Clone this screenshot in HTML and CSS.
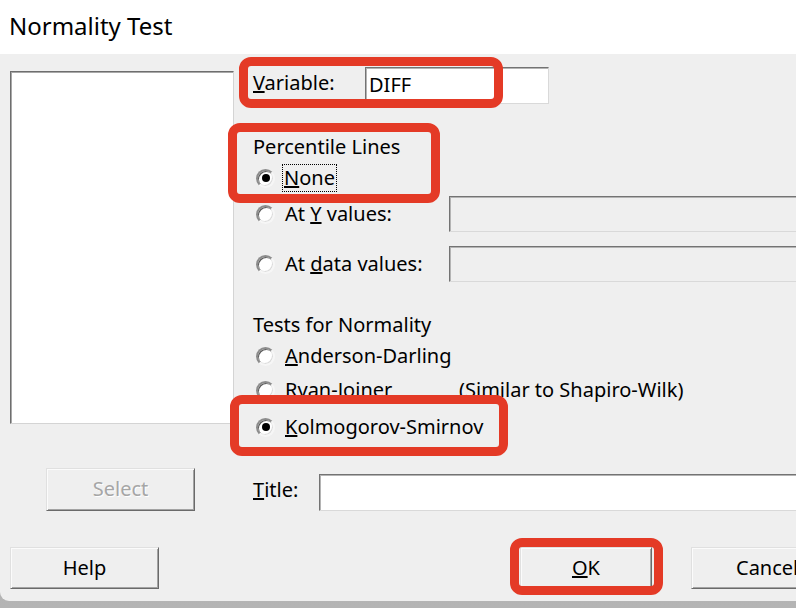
FILE: index.html
```html
<!DOCTYPE html>
<html>
<head>
<meta charset="utf-8">
<link rel="stylesheet" href="styles.css">
</head>
<body>
<div class="window">
  <div class="titlebar">Normality Test</div>
  <div class="content">
    <div class="main">
      <div class="leftcol">
        <div class="listbox"></div>
        <div class="btn select-btn">Select</div>
      </div>
      <div class="rightcol">
        <div class="row r-var">
          <span class="lbl var-lbl up"><u>V</u>ariable:</span>
          <div class="field var-field"><span class="up2">DIFF</span></div>
        </div>
        <div class="row r-pct"><span class="lbl">Percentile Lines</span></div>
        <div class="row r-none">
          <span class="radio checked"></span><span class="lbl focus"><u>N</u>one</span>
        </div>
        <div class="row r-aty">
          <span class="choice"><span class="radio"></span><span class="lbl">At <u>Y</u> values:</span></span>
          <div class="field dis-field"></div>
        </div>
        <div class="row r-atd">
          <span class="choice"><span class="radio"></span><span class="lbl">At <u>d</u>ata values:</span></span>
          <div class="field dis-field"></div>
        </div>
        <div class="row r-tests"><span class="lbl">Tests for Normality</span></div>
        <div class="row r-and">
          <span class="radio"></span><span class="lbl"><u>A</u>nderson-Darling</span>
        </div>
        <div class="row r-ryan">
          <span class="choice ryan"><span class="radio"></span><span class="lbl">Ryan-Joiner</span></span>
          <span class="lbl">(Similar to Shapiro-Wilk)</span>
        </div>
        <div class="row r-kol">
          <span class="radio checked"></span><span class="lbl"><u>K</u>olmogorov-Smirnov</span>
        </div>
        <div class="row r-title">
          <span class="lbl title-lbl up"><u>T</u>itle:</span>
          <div class="field title-field"></div>
        </div>
      </div>
    </div>
    <div class="buttons">
      <div class="btn help-btn">Help</div>
      <div class="btn ok-btn"><u>O</u>K</div>
      <div class="btn cancel-btn">Cancel</div>
    </div>
  </div>
  <div class="anno anno-var"></div>
  <div class="anno anno-pct"></div>
  <div class="anno anno-kol"></div>
  <div class="anno anno-ok"></div>
</div>
</body>
</html>
```

FILE: styles.css
```css
* { box-sizing: border-box; }
html, body { margin: 0; padding: 0; }
body {
  width: 796px;
  height: 608px;
  overflow: hidden;
  background: linear-gradient(#9c9c9c, #b4b4b4);
  font-family: "Noto Sans", "Open Sans", sans-serif;
  font-size: 20px;
  color: #000;
}
.window {
  position: relative;
  width: 796px;
  height: 601px;
  background: #efefef;
  border-bottom-left-radius: 9px;
  overflow: hidden;
}
.titlebar {
  height: 54px;
  background: #fff;
  padding-left: 9px;
  font-size: 24px;
  line-height: 52px;
}
.content { padding-left: 10px; }
.main { display: flex; }
.leftcol {
  width: 224px;
  flex: none;
  padding-top: 17px;
  display: flex;
  flex-direction: column;
}
.listbox {
  width: 224px;
  height: 353px;
  background: #fff;
  border: 1px solid;
  border-color: #6e6e6e #d4d4d4 #d4d4d4 #6e6e6e;
  box-shadow: inset 1px 1px 0 #a8a8a8;
}
.btn {
  height: 42px;
  width: 149px;
  background: #efefef;
  border: 1px solid;
  border-color: #e0e0e0 #6a6a6a #6a6a6a #e0e0e0;
  box-shadow: inset 1px 1px 0 #fbfbfb, inset -1px -1px 0 #a3a3a3;
  display: flex;
  align-items: center;
  justify-content: center;
  padding-bottom: 2px;
  flex: none;
}
.select-btn {
  margin-top: 44px;
  margin-left: 36px;
  height: 43px;
  color: #a6a6a6;
  text-shadow: 1px 1px 0 #ffffff;
}
.rightcol {
  flex: 1;
  padding-left: 19px;
  display: flex;
  flex-direction: column;
  min-width: 0;
}
.row {
  display: flex;
  align-items: center;
  height: 28px;
  white-space: nowrap;
  flex: none;
}
.lbl { display: inline-block; line-height: 1.2; }
.up { padding-bottom: 5px; }
.up2 { display: inline-block; padding-bottom: 3px; }
.r-var { margin-top: 13px; height: 37px; }
.r-pct { margin-top: 29px; }
.r-none { margin-top: 3px; }
.r-aty { margin-top: 4px; height: 36px; }
.r-atd { margin-top: 14px; height: 36px; }
.r-tests { margin-top: 29px; }
.r-and { margin-top: 3px; }
.r-ryan { margin-top: 6px; }
.r-kol { margin-top: 9px; }
.r-title { margin-top: 33px; height: 37px; }

.var-lbl { width: 112px; flex: none; }
.title-lbl { width: 66px; flex: none; }
.field {
  height: 100%;
  background: #fff;
  border: 1px solid;
  border-color: #737373 #d9d9d9 #d9d9d9 #737373;
  box-shadow: inset 1px 1px 0 #b4b4b4;
  display: flex;
  align-items: center;
  flex: none;
}
.var-field { width: 184px; padding-left: 3px; }
.title-field { width: 520px; }
.dis-field { width: 420px; background: #efefef; }
.choice {
  display: flex;
  align-items: center;
  width: 196px;
  flex: none;
}
.choice.ryan { width: 206px; }
.radio {
  position: relative;
  display: inline-block;
  flex: none;
  width: 19px;
  height: 19px;
  margin-left: 3px;
  margin-right: 10px;
  border-radius: 50%;
  background: #fff;
  border: 2px solid;
  border-color: #8c8c8c #f6f6f6 #f6f6f6 #8c8c8c;
  box-shadow: inset 1px 1px 0 #5c5c5c, inset -1px -1px 0 #dcdcdc;
}
.radio.checked::after {
  content: "";
  position: absolute;
  left: 50%;
  top: 50%;
  width: 8px;
  height: 8px;
  margin: -4px 0 0 -4px;
  border-radius: 50%;
  background: #000;
}
.focus {
  outline: 1px dotted #000;
  outline-offset: 0;
  padding: 1px 1px 1px 1px;
  margin-left: -2px;
}
.buttons {
  display: flex;
  margin-top: 36px;
}
.ok-btn { margin-left: 361px; width: 132px; }
.cancel-btn { margin-left: 39px; padding-left: 44px; justify-content: flex-start; }

.anno {
  position: absolute;
  border: 9px solid #e43a26;
  border-radius: 12px;
}
.anno-var { left: 239px; top: 57px; width: 264px; height: 51px; }
.anno-pct { left: 228px; top: 123px; width: 212px; height: 80px; }
.anno-kol { left: 230px; top: 395px; width: 278px; height: 61px; }
.anno-ok { left: 510px; top: 538px; width: 153px; height: 57px; }
```
